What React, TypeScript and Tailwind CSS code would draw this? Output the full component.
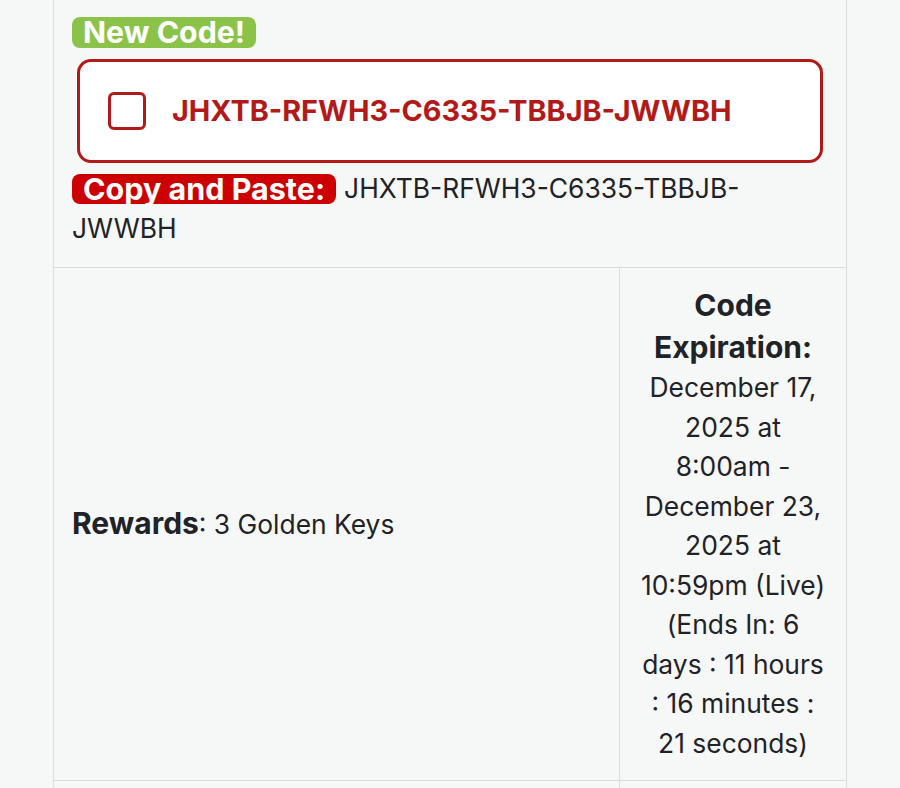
import React from "react";

const code = "JHXTB-RFWH3-C6335-TBBJB-JWWBH";

export default function App() {
  return (
    <div className="h-[788px] overflow-hidden bg-[#f6f7f7] text-[#1f2328]">
      <table className="ml-[53px] w-[794px] border-collapse font-['Inter',sans-serif]">
        <tbody>
          <tr>
            <td colSpan={2} className="border-x border-b border-[#d9dcde] px-[18px] pt-[17px] pb-[19px] align-top">
              <span className="inline-block h-[31px] rounded-lg bg-[#8bc34a] px-[11px] text-[30.3px] font-bold leading-[31px] text-white">
                New Code!
              </span>
              <div className="ml-[5px] mt-[10px] flex h-[104px] w-[746px] items-center rounded-[14px] border-[3px] border-[#b21a1a] bg-white pl-[28px]">
                <span className="h-[38px] w-[38px] rounded-md border-[3px] border-[#b21a1a]" />
                <span className="ml-[26px] text-[28.8px] font-bold text-[#b21a1a]">{code}</span>
              </div>
              <div className="mt-[6px] flex flex-wrap items-center text-[26.4px] leading-[39.5px]">
                <span className="mr-[8px] inline-flex h-[30px] items-center rounded-lg bg-[#cc0000] px-[11px] text-[30.5px] font-bold leading-none text-white">
                  Copy and Paste:
                </span>
                <span>JHXTB-RFWH3-C6335-TBBJB-</span>
                <span className="w-full">JWWBH</span>
              </div>
            </td>
          </tr>
          <tr>
            <td className="border-x border-b border-[#d9dcde] px-[18px] align-middle">
              <p className="text-[26.4px] leading-[39.5px]">
                <span className="text-[30px] font-bold">Rewards</span>: 3 Golden Keys
              </p>
            </td>
            <td className="w-[227px] border-x border-b border-[#d9dcde] px-[16px] pt-[16px] pb-[17px] text-center align-top">
              <p className="text-[30px] font-bold leading-[42px]">Code Expiration:</p>
              <p className="text-[26.4px] leading-[39.5px]">
                December 17, 2025 at 8:00am - December 23, 2025 at 10:59pm (Live) (Ends In: 6 days : 11 hours : 16 minutes : 21 seconds)
              </p>
            </td>
          </tr>
          <tr>
            <td className="h-[60px] border-x border-[#d9dcde]" />
            <td className="border-x border-[#d9dcde]" />
          </tr>
        </tbody>
      </table>
    </div>
  );
}
